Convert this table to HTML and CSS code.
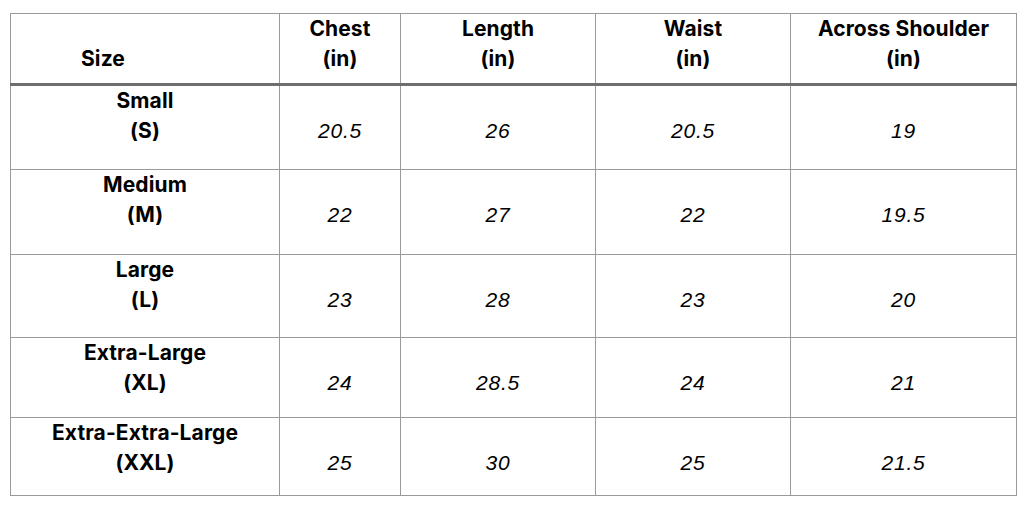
FILE: index.html
```html
<!DOCTYPE html>
<html>
<head>
<meta charset="utf-8">
<link rel="stylesheet" href="styles.css">
</head>
<body>
<table class="sizes">
  <colgroup>
    <col class="c1"><col class="c2"><col class="c3"><col class="c4"><col class="c5">
  </colgroup>
  <thead>
    <tr>
      <th class="size-h"><br>Size</th>
      <th>Chest<br>(in)</th>
      <th>Length<br>(in)</th>
      <th>Waist<br>(in)</th>
      <th>Across Shoulder<br>(in)</th>
    </tr>
  </thead>
  <tbody>
    <tr class="r1"><th>Small<br>(S)</th><td>20.5</td><td>26</td><td>20.5</td><td>19</td></tr>
    <tr class="r2"><th>Medium<br>(M)</th><td>22</td><td>27</td><td>22</td><td>19.5</td></tr>
    <tr class="r3"><th>Large<br>(L)</th><td>23</td><td>28</td><td>23</td><td>20</td></tr>
    <tr class="r4"><th>Extra-Large<br>(XL)</th><td>24</td><td>28.5</td><td>24</td><td>21</td></tr>
    <tr class="r5"><th>Extra-Extra-Large<br>(XXL)</th><td>25</td><td>30</td><td>25</td><td>21.5</td></tr>
  </tbody>
</table>
</body>
</html>
```
FILE: styles.css
```css
html, body {
  margin: 0;
  background: #fff;
}
body {
  padding: 13px 10px 0 10px;
}
.sizes {
  border-collapse: collapse;
  table-layout: fixed;
  width: 1006px;
  color: #000;
}
.c1 { width: 269px; }
.c2 { width: 121px; }
.c3 { width: 195px; }
.c4 { width: 195px; }
.c5 { width: 226px; }
.sizes th, .sizes td {
  border: 1px solid #9a9a9a;
  padding: 0;
  vertical-align: top;
  text-align: center;
  line-height: 30px;
}
.sizes th {
  font-family: "Inter", "Liberation Sans", sans-serif;
  font-weight: 700;
  font-size: 21px;
  letter-spacing: 0.1px;
}
.sizes td {
  font-family: "Liberation Sans", Arial, sans-serif;
  font-style: italic;
  font-size: 21px;
  padding-top: 30px;
  letter-spacing: 0.8px;
}
.sizes thead th {
  height: 69px;
  border-bottom: 3px solid #6e6e6e;
}
.sizes thead th.size-h {
  text-align: left;
  padding-left: 70px;
}
.sizes tbody th { padding-top: 0; }
.r1 > * { height: 83px; }
.r2 > * { height: 84px; }
.r3 > * { height: 82px; }
.r4 > * { height: 79px; }
.r5 > * { height: 77px; }
.sizes tbody td { height: auto; }
```
